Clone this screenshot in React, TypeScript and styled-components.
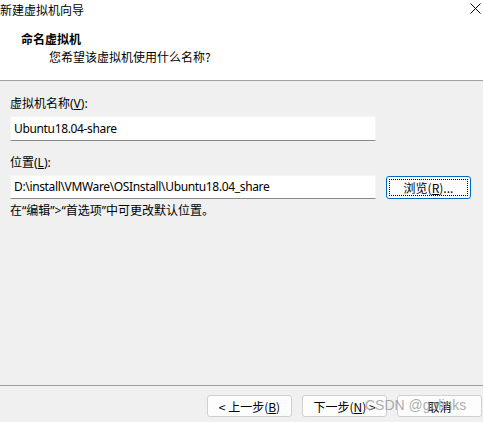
import styled, {createGlobalStyle} from "styled-components";

const GlobalStyle = createGlobalStyle`
  html, body {
    margin: 0;
    padding: 0;
    background: #f0f0f0;
  }
  body {
    font-family: "Noto Sans", "Noto Sans CJK SC", sans-serif;
    font-size: 12px;
    color: #000;
  }
`;

const Window = styled.div`
  width: 483px;
  height: 422px;
  display: flex;
  flex-direction: column;
  background: #f0f0f0;
  overflow: hidden;
`;

const Header = styled.div`
  height: 81px;
  box-sizing: border-box;
  background: #fff;
  border-bottom: 1px solid #a0a0a0;
  display: flex;
  flex-direction: column;
`;

const TitleBar = styled.div`
  height: 20px;
  display: flex;
  align-items: center;
  justify-content: space-between;
  font-family: "Noto Sans CJK SC", sans-serif;
  font-size: 12px;
  line-height: 20px;
`;

const Close = styled.div`
  width: 14px;
  height: 14px;
  display: flex;
  align-items: center;
  justify-content: center;
  margin-top: -3px;
  margin-right: 1px;
`;

const Heading = styled.div`
  padding: 11px 0 0 21px;
  font-family: "Noto Sans CJK SC", sans-serif;
  font-weight: bold;
  font-size: 12px;
  line-height: 16px;
`;

const SubHeading = styled.div`
  padding: 2px 0 0 49px;
  font-family: "Noto Sans CJK SC", sans-serif;
  font-size: 12px;
  line-height: 16px;
`;

const Body = styled.div`
  flex: 1;
  display: flex;
  flex-direction: column;
  padding: 15px 0 0 10px;
`;

const Label = styled.div<{$top?: number}>`
  font-family: "Noto Sans", "Noto Sans CJK SC", sans-serif;
  font-size: 12px;
  line-height: 16px;
  margin-top: ${p => p.$top || 0}px;
  margin-bottom: 4px;
`;

const Key = styled.span`
  text-decoration: underline;
  text-underline-offset: 1px;
`;

const Row = styled.div`
  display: flex;
  align-items: center;
  gap: 10px;
`;

const Field = styled.div<{$height: number}>`
  width: 366px;
  height: ${p => p.$height}px;
  box-sizing: border-box;
  background: #fff;
  border: 1px solid #f5f5f5;
  border-bottom: 1px solid #8a8a8a;
  padding: 0 0 1px 3px;
  display: flex;
  align-items: center;
  font-family: "Noto Sans", sans-serif;
  font-size: 12px;
  letter-spacing: -0.35px;
  white-space: nowrap;
`;

const Browse = styled.button`
  width: 85px;
  height: 23px;
  box-sizing: border-box;
  background: #fdfdfd;
  border: 1px solid #0067c0;
  border-radius: 3px;
  padding: 2px;
  display: flex;
  font-family: "Noto Sans CJK SC", sans-serif;
  font-size: 12px;
  color: #000;
`;

const FocusRing = styled.span`
  flex: 1;
  border: 1px dotted #000;
  display: flex;
  align-items: center;
  justify-content: center;
`;

const Hint = styled.div`
  margin-top: 4px;
  font-family: "Noto Sans", "Noto Sans CJK SC", sans-serif;
  font-size: 12px;
  line-height: 16px;
`;

const Footer = styled.div`
  height: 37px;
  box-sizing: border-box;
  border-top: 1px solid #a0a0a0;
  display: flex;
  justify-content: flex-end;
  align-items: flex-start;
  padding: 9px 1px 0 0;
  gap: 10px;
  position: relative;
`;

const FooterButton = styled.button`
  width: 85px;
  height: 22px;
  box-sizing: border-box;
  background: #fdfdfd;
  border: 1px solid #d0d0d0;
  border-radius: 3px;
  font-family: "Noto Sans CJK SC", sans-serif;
  font-size: 12px;
  color: #000;
  padding: 0;
  display: flex;
  align-items: center;
  justify-content: center;
`;

const Watermark = styled.div`
  position: absolute;
  left: 365px;
  top: 11px;
  font-family: "Liberation Sans", sans-serif;
  font-size: 14px;
  color: rgba(150, 150, 150, 0.8);
  pointer-events: none;
  white-space: nowrap;
`;

export default function App() {
    return (
        <Window>
            <GlobalStyle/>
            <Header>
                <TitleBar>
                    <span>新建虚拟机向导</span>
                    <Close>
                        <svg width="11" height="11" viewBox="0 0 11 11">
                            <path d="M0.5 0.5 L10.5 10.5 M10.5 0.5 L0.5 10.5" stroke="#000" strokeWidth="1"/>
                        </svg>
                    </Close>
                </TitleBar>
                <Heading>命名虚拟机</Heading>
                <SubHeading>您希望该虚拟机使用什么名称?</SubHeading>
            </Header>

            <Body>
                <Label>虚拟机名称(<Key>V</Key>):</Label>
                <Field $height={25}>Ubuntu18.04-share</Field>

                <Label $top={14}>位置(<Key>L</Key>):</Label>
                <Row>
                    <Field $height={24}>D:\install\VMWare\OSInstall\Ubuntu18.04_share</Field>
                    <Browse><FocusRing>浏览(<Key>R</Key>)...</FocusRing></Browse>
                </Row>
                <Hint>在“编辑”&gt;“首选项”中可更改默认位置。</Hint>
            </Body>

            <Footer>
                <FooterButton>&lt; 上一步(<Key>B</Key>)</FooterButton>
                <FooterButton>下一步(<Key>N</Key>) &gt;</FooterButton>
                <FooterButton>取消</FooterButton>
                <Watermark>CSDN @golinks</Watermark>
            </Footer>
        </Window>
    );
}
